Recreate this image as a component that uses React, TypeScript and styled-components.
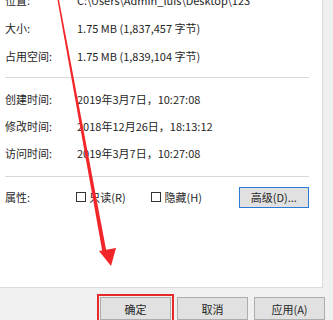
import React from "react";
import styled, { createGlobalStyle } from "styled-components";

const Global = createGlobalStyle`
  html, body { margin: 0; padding: 0; background: #f0f0f0; }
  body { width: 333px; height: 320px; overflow: hidden; }
  #root { position: relative; width: 333px; height: 320px; overflow: hidden; }
`;

const Window = styled.div`
  width: 333px;
  height: 320px;
  background: #f0f0f0;
  font-family: "Noto Sans CJK SC", "Noto Sans", sans-serif;
  font-size: 11px;
  color: #262626;
  display: flex;
  flex-direction: column;
  overflow: hidden;
`;

const Panel = styled.div`
  width: 323px;
  height: 292px;
  background: #ffffff;
  border-right: 1px solid #dadada;
  border-bottom: 1px solid #dadada;
  box-sizing: border-box;
  overflow: hidden;
`;

const Content = styled.div`
  margin-top: -14px;
  padding: 0 13px 0 5px;
  display: flex;
  flex-direction: column;
`;

const Row = styled.div<{ $h: number }>`
  height: ${(p) => p.$h}px;
  display: grid;
  grid-template-columns: 72px 1fr;
  align-items: center;
  white-space: nowrap;
`;

const Label = styled.span``;
const Value = styled.span``;

const Divider = styled.div<{ $top: number; $bottom: number }>`
  height: 1px;
  background: #d9d9d9;
  margin: ${(p) => p.$top}px 0 ${(p) => p.$bottom}px;
`;

const AttrRow = styled.div`
  height: 22px;
  display: flex;
  align-items: center;
`;

const AttrLabel = styled.span`
  width: 72px;
`;

const Check = styled.label<{ $w: number }>`
  width: ${(p) => p.$w}px;
  display: flex;
  align-items: center;
  gap: 3px;
`;

const Box = styled.span`
  width: 10px;
  height: 10px;
  border: 1px solid #333;
  box-sizing: border-box;
  background: #fff;
`;

const AdvButton = styled.div`
  margin-left: 12px;
  width: 71px;
  height: 21px;
  box-sizing: border-box;
  border: 1px solid #2b7bd6;
  background: #e1e1e1;
  display: flex;
  align-items: center;
  justify-content: center;
`;

const Footer = styled.div`
  margin-top: 9px;
  padding-right: 8px;
  display: flex;
  justify-content: flex-end;
  gap: 6px;
`;

const Btn = styled.div<{ $marked?: boolean }>`
  width: 71px;
  height: 23px;
  box-sizing: border-box;
  border: 1px solid #adadad;
  background: #e1e1e1;
  display: flex;
  align-items: center;
  justify-content: center;
  outline: ${(p) => (p.$marked ? "2px solid #e8282b" : "none")};
  outline-offset: ${(p) => (p.$marked ? "1px" : "0")};
`;

const Arrow = styled.svg`
  position: absolute;
  left: 0;
  top: 0;
  pointer-events: none;
`;

const topRows = [
  ["位置:", "C:\\Users\\Admin_luis\\Desktop\\123"],
  ["大小:", "1.75 MB (1,837,457 字节)"],
  ["占用空间:", "1.75 MB (1,839,104 字节)"],
];

const timeRows = [
  ["创建时间:", "2019年3月7日，10:27:08"],
  ["修改时间:", "2018年12月26日，18:13:12"],
  ["访问时间:", "2019年3月7日，10:27:08"],
];

export default function App() {
  return (
    <>
      <Global />
      <Window>
        <Panel>
          <Content>
            {topRows.map(([l, v]) => (
              <Row key={l} $h={28}>
                <Label>{l}</Label>
                <Value>{v}</Value>
              </Row>
            ))}
            <Divider $top={7} $bottom={7} />
            {timeRows.map(([l, v]) => (
              <Row key={l} $h={27}>
                <Label>{l}</Label>
                <Value>{v}</Value>
              </Row>
            ))}
            <Divider $top={10} $bottom={9} />
            <AttrRow>
              <AttrLabel>属性:</AttrLabel>
              <Check $w={76}>
                <Box />
                只读(R)
              </Check>
              <Check $w={76}>
                <Box />
                隐藏(H)
              </Check>
              <AdvButton>高级(D)...</AdvButton>
            </AttrRow>
          </Content>
        </Panel>
        <Footer>
          <Btn $marked>确定</Btn>
          <Btn>取消</Btn>
          <Btn>应用(A)</Btn>
        </Footer>
      </Window>
      <Arrow width="333" height="320" viewBox="0 0 333 320">
        <polygon points="57.5,0 59,0 106.5,252 102.5,252.5" fill="#f2262a" />
        <polygon points="99,251 116,248 111,266" fill="#f2262a" />
      </Arrow>
    </>
  );
}
